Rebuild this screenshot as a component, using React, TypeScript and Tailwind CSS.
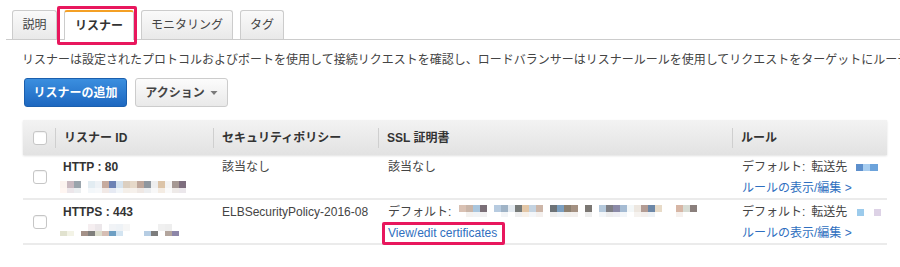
import React from 'react';

type Row = string[];

// pixelated placeholder used where the console values are blurred out
function Mosaic({ rows, cell = 7, className = '' }: { rows: Row[]; cell?: number; className?: string }) {
  return (
    <div className={`flex flex-col ${className}`}>
      {rows.map((r, i) => (
        <div key={i} className="flex">
          {r.map((c, j) => (
            <span key={j} style={{ background: c, width: cell, height: i === 0 ? cell : cell - 2 }} />
          ))}
        </div>
      ))}
    </div>
  );
}

function Checkbox() {
  return <span className="block w-[14px] h-[14px] rounded-[3px] border border-[#c6c6c6] bg-white shadow-[inset_0_1px_1px_rgba(0,0,0,0.06)]" />;
}

function HeadCell({ label }: { label: string }) {
  return (
    <div className="flex items-center h-full">
      <span className="w-px h-[20px] bg-[#cfcfcf]" />
      <span className="pl-[8px] font-bold text-[#333]">{label}</span>
    </div>
  );
}

const idBlur1: Row[] = [
  ['#fbf3ef', '#c9b9c0', '#9aa4ac', '#ffffff', '#e2ecf2', '#eef2f6', '#c6ab9f', '#6d82b4', '#d6e3ee', '#dccfc0', '#e6d9c9', '#bfa79b', '#8f979f', '#eeeeee', '#dcc4a8', '#f4f4f4', '#a59893', '#7d6d7d', '#ffffff'],
  ['#fff6f2', '#ece6ea', '#ebeef0', '#ffffff', '#f3f7fa', '#f6f8fa', '#f1e9e6', '#e6eaf3', '#f2f6f9', '#f4efe9', '#f6f1ec', '#efe8e4', '#eceef0', '#f8f8f8', '#f4ece3', '#fafafa', '#eeeae8', '#ebe7eb', '#ffffff'],
];

const idBlur2: Row[] = [
  ['#ffffff', '#ffffff', '#ffffff', '#ffffff', '#f5eef0', '#ece7ea', '#ffffff', '#f1f3f6', '#eef2f6', '#f6f6f6', '#ffffff', '#ffffff', '#ffffff', '#ffffff', '#f0f0f0', '#eeeeee', '#ffffff', '#ffffff', '#ffffff'],
  ['#e1e2cf', '#f3f3e6', '#ffffff', '#a49188', '#7f7e7c', '#dcdccc', '#d6beb4', '#6e9fc3', '#d3e4f1', '#ffffff', '#ffffff', '#ffffff', '#b6cde3', '#7d7d7d', '#ffffff', '#b3a59d', '#8d86a8', '#ffffff', '#ffffff'],
];

const sslBlur: Row[] = [
  ['#d9c1b3', '#c9b5a8', '#a9c6de', '#7b6f77', '#ffffff', '#b7cbe0', '#9fb3c6', '#e4eaf0', '#767a78', '#e3c7a7', '#c4d3e1', '#cdb6a8', '#ffffff', '#6d7377', '#7b9fc0', '#8c8070', '#a49182', '#ffffff', '#7b7773', '#ffffff', '#b5c9dc', '#7f7f85', '#8b8aa8', '#a5bbd3', '#f3f7f8', '#ede7e0', '#b39c94', '#6c87a7', '#e8dbc8', '#ffffff', '#ffffff', '#d7b6a5', '#d7dcd4', '#8a7f7c', '#ffffff', '#ffffff', '#ffffff', '#ffffff'],
  ['#ffffff', '#f4f2f0', '#f2f4f6', '#f2f1f2', '#ffffff', '#ffffff', '#f3f5f7', '#ffffff', '#efeff0', '#f7f1ea', '#f4f6f9', '#f4f0ee', '#ffffff', '#eeeeee', '#eef2f6', '#f1efec', '#f3f0ee', '#ffffff', '#eeeeee', '#ffffff', '#f3f6f9', '#ededee', '#efeff4', '#f3f6f9', '#ffffff', '#f6f3f0', '#f3efed', '#eef2f6', '#ffffff', '#ffffff', '#ffffff', '#f6f1ee', '#ffffff', '#ffffff', '#ffffff', '#ffffff', '#ffffff', '#ffffff'],
];

const cols = 'grid grid-cols-[32px_158px_165px_354px_155px]';

export default function App() {
  return (
    <div className="relative w-[900px] h-[267px] overflow-hidden bg-white text-[12px] text-[#444] font-[family-name:'Liberation_Sans','Noto_Sans_CJK_JP',sans-serif]">
      {/* tabs */}
      <div className="ml-[6px] pt-[10px] pl-[6px] flex gap-[7px] border-b border-[#cccccc]">
        <div className="w-[45px] h-[29px] flex items-center justify-center rounded-t-[3px] border border-b-0 border-[#cccccc] bg-gradient-to-b from-[#fafafa] to-[#e9e9e9]">説明</div>
        <div className="w-[70px] h-[30px] -mb-px flex items-center justify-center rounded-t-[3px] border border-b-0 border-[#cccccc] border-t-2 border-t-[#f4a025] bg-white font-bold text-[#333]">リスナー</div>
        <div className="w-[92px] h-[29px] flex items-center justify-center rounded-t-[3px] border border-b-0 border-[#cccccc] bg-gradient-to-b from-[#fafafa] to-[#e9e9e9]">モニタリング</div>
        <div className="w-[44px] h-[29px] flex items-center justify-center rounded-t-[3px] border border-b-0 border-[#cccccc] bg-gradient-to-b from-[#fafafa] to-[#e9e9e9]">タグ</div>
      </div>

      <p className="mt-[11px] ml-[22px] leading-[18px] whitespace-nowrap">
        リスナーは設定されたプロトコルおよびポートを使用して接続リクエストを確認し、ロードバランサーはリスナールールを使用してリクエストをターゲットにルーティングします。
      </p>

      <div className="mt-[9px] ml-[24px] flex gap-[8px]">
        <button className="h-[29px] w-[103px] rounded-[3px] border border-[#1b5fad] bg-gradient-to-b from-[#3b8fdf] to-[#1d67c0] text-white font-bold">リスナーの追加</button>
        <button className="h-[29px] w-[93px] rounded-[3px] border border-[#cccccc] bg-gradient-to-b from-[#fcfcfc] to-[#e9e9e9] text-[#444] font-bold flex items-center justify-center gap-[5px]">
          アクション
          <svg width="8" height="6" viewBox="0 0 8 6"><path d="M0.5 1h7L4 5z" fill="#7a7a7a" /></svg>
        </button>
      </div>

      {/* listeners table */}
      <div className="mt-[13px] ml-[23px] w-[864px]">
        <div className={`${cols} h-[35px] bg-gradient-to-b from-[#f3f3f3] to-[#e2e2e2] shadow-[0_1px_2px_rgba(0,0,0,0.12)]`}>
          <div className="flex items-center pl-[10px]"><Checkbox /></div>
          <HeadCell label="リスナー ID" />
          <HeadCell label="セキュリティポリシー" />
          <HeadCell label="SSL 証明書" />
          <HeadCell label="ルール" />
        </div>

        <div className={`${cols} h-[45px] border-b-2 border-[#ebebeb] leading-[21px]`}>
          <div className="flex items-center pl-[10px]"><Checkbox /></div>
          <div className="pl-[8px] pt-[2px]">
            <div className="font-bold text-[#333]">HTTP : 80</div>
            <Mosaic rows={idBlur1} className="ml-[-3px] mt-[3px]" />
          </div>
          <div className="pl-[9px] pt-[2px]">該当なし</div>
          <div className="pl-[10px] pt-[2px]">該当なし</div>
          <div className="pl-[10px] pt-[2px]">
            <div className="flex items-center">
              デフォルト: <span className="ml-[6px]">転送先</span>
              <span className="ml-[9px] flex">
                <span className="w-[7px] h-[7px] bg-[#5d8fcc]" />
                <span className="w-[7px] h-[7px] bg-[#a7cdf0]" />
                <span className="w-[8px] h-[7px] bg-[#6ca3db]" />
              </span>
            </div>
            <div className="text-[#2f6fc0]">ルールの表示/編集 &gt;</div>
          </div>
        </div>

        <div className={`${cols} h-[45px] border-b-2 border-[#ebebeb] leading-[21px]`}>
          <div className="flex items-center pl-[10px]"><Checkbox /></div>
          <div className="pl-[8px] pt-[2px]">
            <div className="font-bold text-[#333]">HTTPS : 443</div>
            <Mosaic rows={idBlur2} className="ml-[-3px] mt-[1px]" />
          </div>
          <div className="pl-[9px] pt-[2px]">ELBSecurityPolicy-2016-08</div>
          <div className="pl-[10px] pt-[2px]">
            <div className="flex items-start">
              デフォルト:
              <Mosaic rows={sslBlur} className="ml-[8px] mt-[3px]" />
            </div>
            <div className="text-[#2f6fc0]">View/edit certificates</div>
          </div>
          <div className="pl-[10px] pt-[2px]">
            <div className="flex items-center">
              デフォルト: <span className="ml-[6px]">転送先</span>
              <span className="ml-[10px] flex">
                <span className="w-[7px] h-[7px] bg-[#9ccbec]" />
                <span className="w-[10px] h-[7px] bg-white" />
                <span className="w-[7px] h-[7px] bg-[#ddd2e6]" />
              </span>
            </div>
            <div className="text-[#2f6fc0]">ルールの表示/編集 &gt;</div>
          </div>
        </div>
      </div>

      {/* annotation boxes */}
      <div className="absolute left-[57px] top-[6px] w-[80px] h-[39px] rounded-[2px] border-[3px] border-[#e8175d]" />
      <div className="absolute left-[382px] top-[222px] w-[123px] h-[23px] rounded-[2px] border-[3px] border-[#e8175d]" />
    </div>
  );
}
